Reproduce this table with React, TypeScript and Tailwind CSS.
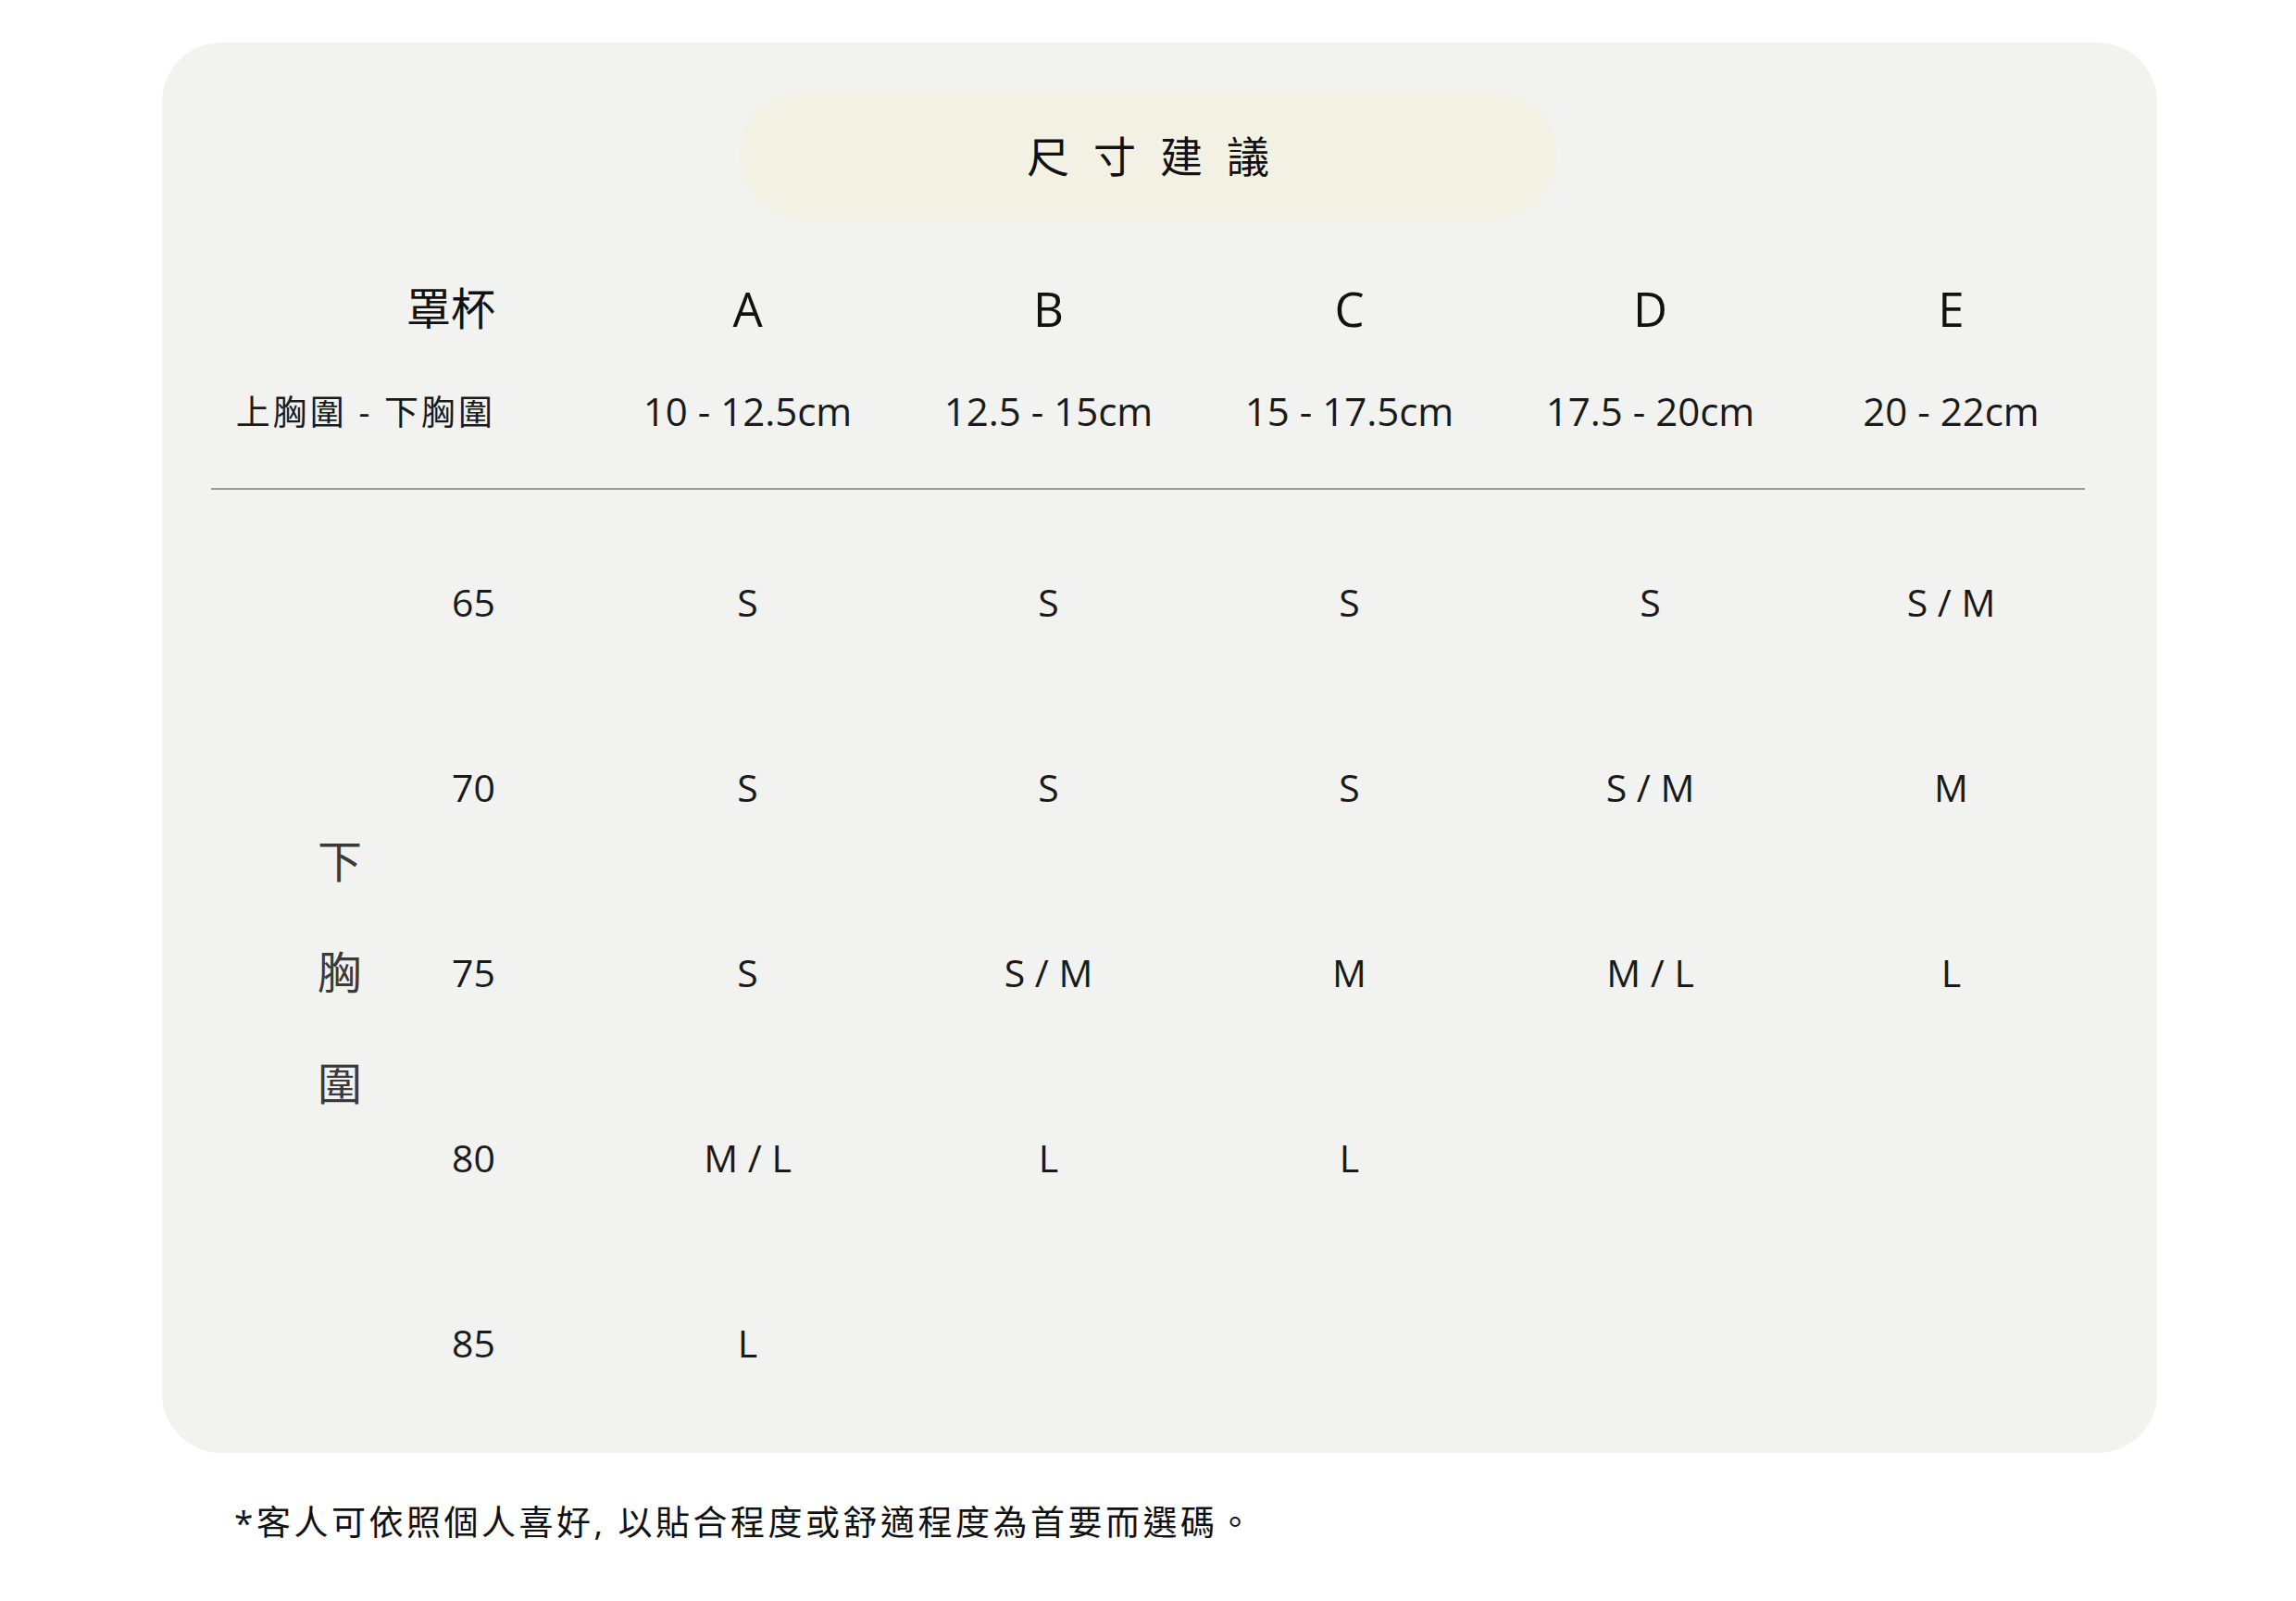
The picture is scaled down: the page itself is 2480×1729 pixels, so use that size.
const cups = ["A", "B", "C", "D", "E"];
const ranges = ["10 - 12.5cm", "12.5 - 15cm", "15 - 17.5cm", "17.5 - 20cm", "20 - 22cm"];

const rows: { band: string; sizes: string[] }[] = [
  { band: "65", sizes: ["S", "S", "S", "S", "S / M"] },
  { band: "70", sizes: ["S", "S", "S", "S / M", "M"] },
  { band: "75", sizes: ["S", "S / M", "M", "M / L", "L"] },
  { band: "80", sizes: ["M / L", "L", "L", "", ""] },
  { band: "85", sizes: ["L", "", "", "", ""] },
];

export default function App() {
  return (
    <div className="min-h-screen bg-white pt-[46px] pl-[175px] font-['Open_Sans','Noto_Sans_CJK_TC',sans-serif] text-[#1a1a1a]">
      <div className="w-[2155px] h-[1523px] rounded-[64px] bg-[#f2f2f0] pt-[52px]">
        {/* title */}
        <div className="ml-[624px] flex h-[139px] w-[882px] items-center justify-center rounded-[70px] bg-[#f3f0e4]">
          <span className="pl-[26px] text-[46px] leading-none tracking-[26px] text-[#111]">尺寸建議</span>
        </div>

        {/* cup header */}
        <div className="mt-[66px] flex h-[60px] items-center">
          <div className="w-[360px] text-right text-[48px] leading-none text-[#111]">罩杯</div>
          <div className="ml-[110px] flex">
            {cups.map((c) => (
              <div key={c} className="w-[325px] text-center text-[51px] leading-none text-[#111]">
                {c}
              </div>
            ))}
          </div>
        </div>

        <div className="mt-[51px] flex h-[60px] items-center">
          <div className="w-[360px] text-right text-[37px] leading-none tracking-[3px]">上胸圍 - 下胸圍</div>
          <div className="ml-[110px] flex">
            {ranges.map((r) => (
              <div key={r} className="w-[325px] text-center text-[42px] leading-none">
                {r}
              </div>
            ))}
          </div>
        </div>

        <div className="ml-[53px] mt-[53px] h-[2px] w-[2024px] bg-[#9a9a9a]" />

        {/* body */}
        <div className="mt-[21px] flex">
          <div className="flex w-[270px] items-center justify-center pl-[114px]">
            <div className="flex flex-col items-center gap-[72px] text-[48px] leading-[48px] text-[#3a3a3a]">
              <span>下</span>
              <span>胸</span>
              <span>圍</span>
            </div>
          </div>
          <div className="flex flex-col">
            {rows.map((row) => (
              <div key={row.band} className="flex h-[200px] items-center">
                <div className="w-[90px] text-right text-[41px] leading-none">{row.band}</div>
                <div className="ml-[110px] flex">
                  {row.sizes.map((s, i) => (
                    <div key={i} className="w-[325px] text-center text-[41px] leading-none">
                      {s}
                    </div>
                  ))}
                </div>
              </div>
            ))}
          </div>
        </div>
      </div>

      <p className="ml-[78px] mt-[56px] text-[37px] leading-none tracking-[3.5px] text-[#111]">
        *客人可依照個人喜好, 以貼合程度或舒適程度為首要而選碼。
      </p>
    </div>
  );
}
